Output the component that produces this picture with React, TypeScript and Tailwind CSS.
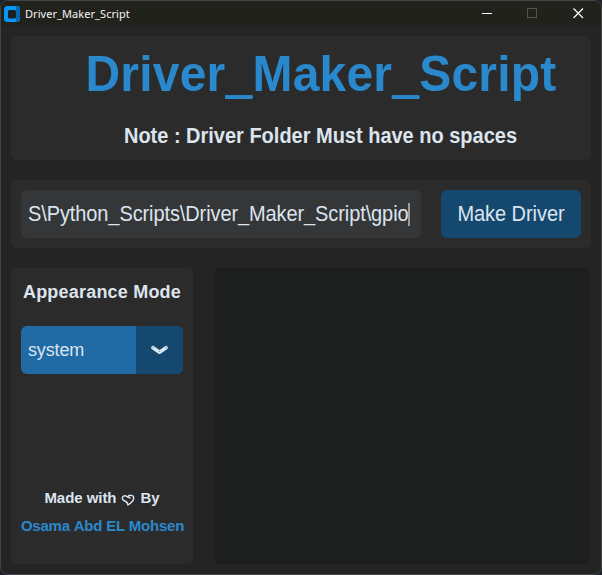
function TitleBar() {
  return (
    <header className="flex h-[25px] shrink-0 items-center bg-[#22221c] font-['Noto_Sans','Open_Sans',sans-serif]">
      <svg className="ml-[3px] h-4 w-4" viewBox="0 0 16 16">
        <rect width="16" height="16" rx="3.5" fill="#0797fb" />
        <path d="M12 0.2 L14 1 Q16 2 16 4 V12 Q16 14.5 13.5 15.7 L12 16 Z" fill="#0567b4" />
        <rect x="4" y="4" width="8" height="8.500" rx="1.500" fill="#1d1f21" />
      </svg>
      <span className="ml-[5px] text-[11px] leading-[16px] tracking-[0.06px] text-[#f4f4f2]">Driver_Maker_Script</span>
      <svg className="ml-auto h-6 w-[120px]" viewBox="0 0 120 24" fill="none" shapeRendering="crispEdges">
        <path d="M1 11.500H11" stroke="#fff" />
        <rect x="46.500" y="6.500" width="9" height="9" stroke="#52524c" />
        <path d="M92.500 6.500L102 16M102 6.500L92.500 16" stroke="#fff" strokeWidth="1.200" shapeRendering="auto" />
      </svg>
    </header>
  );
}

function HeavyUnderscore() {
  return <span className="[text-shadow:0_1px_0_#2a88cc,0_2px_0_#2a88cc]">_</span>;
}

export default function App() {
  return (
    <div className="h-[575px] w-[602px] overflow-hidden bg-[#20222b]">
      <div className="flex h-[575px] w-[602px] flex-col overflow-hidden rounded-[8px] border border-[#434448] bg-[#242424] font-['Liberation_Sans',Arial,sans-serif] [font-kerning:none]">
        <TitleBar />
        <main className="flex flex-col gap-5 px-[10px] pt-[10px]">
          <section className="flex h-[124px] flex-col items-center rounded-[6px] bg-[#2b2b2b] pl-10">
            <h1 className="mt-[11px] h-[56px] origin-[50%_45px] scale-y-[1.045] whitespace-nowrap text-[48px] leading-[56px] font-bold tracking-[0.22px] text-[#2a88cc]">
              Driver<HeavyUnderscore />Maker<HeavyUnderscore />Script
            </h1>
            <p className="mt-[21px] mr-px origin-[50%_19px] scale-y-[1.06] whitespace-nowrap text-[20px] leading-6 font-bold tracking-[-0.01px] text-[#dce4ee]">Note : Driver Folder Must have no spaces</p>
          </section>
          <section className="flex h-[68px] gap-5 rounded-[6px] bg-[#2b2b2b] p-[10px]">
            <div className="flex h-12 w-[400px] items-center rounded-[6px] bg-[#343638] pl-[7px]">
              <span className="origin-[50%_19px] scale-y-[1.06] whitespace-nowrap text-[20px] leading-6 tracking-[-0.1px] text-[#dce4ee]">S\Python_Scripts\Driver_Maker_Script\gpio</span>
              <i className="-ml-px h-[23px] w-[2px] bg-[#989a9c]" />
            </div>
            <button className="h-12 w-[140px] rounded-[6px] bg-[#14486f] text-[20px] leading-6 tracking-[-0.05px] text-[#dce4ee]">
              <span className="inline-block origin-[50%_19px] scale-y-[1.06]">Make Driver</span>
            </button>
          </section>
          <div className="flex gap-[21px]">
            <aside className="flex h-[296px] w-[182px] flex-col items-center rounded-[6px] bg-[#2b2b2b]">
              <h2 className="mt-3 whitespace-nowrap text-[18px] leading-6 font-bold tracking-[0.2px] text-[#dce4ee]">Appearance Mode</h2>
              <button className="mt-[22px] flex h-12 w-[162px] overflow-hidden rounded-[6px] bg-[#206aa5] text-left">
                <span className="w-[115px] pl-[7px] text-[18px] leading-[48px] tracking-[-0.15px] text-[#dce4ee]">system</span>
                <span className="flex h-12 w-[47px] items-center justify-center bg-[#14486f]">
                  <svg className="h-[10px] w-[17px]" viewBox="0 0 17 10" fill="none">
                    <path d="M2 2.700L8.500 7.200L15 2.700" stroke="#dce4ee" strokeWidth="3.600" strokeLinecap="round" strokeLinejoin="round" />
                    <path d="M1.500 2.500h1M14.500 2.500h1M8 6.500h1" stroke="#6e8dab" />
                  </svg>
                </span>
              </button>
              <p className="mt-[114px] flex items-center whitespace-nowrap text-[15px] leading-5 font-bold tracking-[-0.05px] text-[#dce4ee]">
                Made with
                <svg className="mx-[5px] mt-[3px] h-[12px] w-[14px]" viewBox="0 0 14 12" fill="none">
                  <path d="M6.500 3C5 1.300 2.500 1.200 1.600 3C.8 5 2 6.700 4.500 7.300C6 8 6.700 9.500 7 11C8.500 10 11.500 8 12.400 5.500C13.200 3 12 1.200 10 1.200C8 1.100 7 2 6.500 3L9.500 4" stroke="#dce4ee" strokeWidth="1.500" strokeLinejoin="round" />
                </svg>
                By
              </p>
              <p className="mt-2 ml-px whitespace-nowrap text-[15px] leading-5 font-bold tracking-[-0.23px] text-[#2a88cc]">Osama Abd EL Mohsen</p>
            </aside>
            <div className="h-[296px] w-[376px] rounded-[6px] bg-[#1d1e1e]" />
          </div>
        </main>
      </div>
    </div>
  );
}
